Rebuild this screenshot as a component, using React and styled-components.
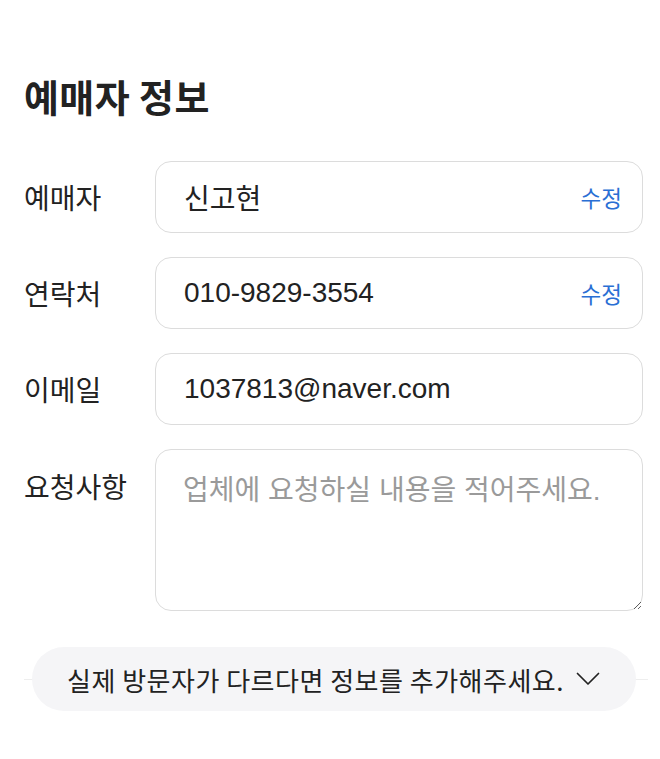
import React, { useState } from 'react';
import styled, { createGlobalStyle } from 'styled-components';

const GlobalStyle = createGlobalStyle`
  html, body {
    margin: 0;
    padding: 0;
    background: #ffffff;
  }
  body {
    font-family: "Liberation Sans", "Noto Sans CJK KR", sans-serif;
    color: #222222;
  }
`;

const fields = [
    { label: '예매자', value: '신고현', editable: true },
    { label: '연락처', value: '010-9829-3554', editable: true },
    { label: '이메일', value: '1037813@naver.com', editable: false },
];

const App = () => {
    const [request, setRequest] = useState('');

    return (
        <>
            <GlobalStyle />
            <Section>
                <Title>예매자 정보</Title>
                <Form>
                    {fields.map((f) => (
                        <Row key={f.label}>
                            <Label>{f.label}</Label>
                            <InputBox>
                                <Value>{f.value}</Value>
                                {f.editable && <EditButton>수정</EditButton>}
                            </InputBox>
                        </Row>
                    ))}
                    <Row $top>
                        <Label $top>요청사항</Label>
                        <TextArea
                            value={request}
                            onChange={(e) => setRequest(e.target.value)}
                            placeholder="업체에 요청하실 내용을 적어주세요."
                        />
                    </Row>
                </Form>
                <ToggleWrap>
                    <ToggleButton>
                        실제 방문자가 다르다면 정보를 추가해주세요.
                        <svg width="24" height="14" viewBox="0 0 24 14" fill="none" stroke="#222" strokeWidth="1.7" strokeLinecap="round" strokeLinejoin="round">
                            <path d="M1.5 1.5l10.5 10.5 10.5-10.5" />
                        </svg>
                    </ToggleButton>
                </ToggleWrap>
            </Section>
        </>
    );
};

const Section = styled.section`
    padding: 72px 17px 48px 24px;
`;

const Title = styled.h2`
    margin: 0 0 41px 0;
    font-family: "Noto Sans CJK KR", sans-serif;
    font-size: 38px;
    font-weight: 700;
    line-height: 48px;
    letter-spacing: 0.4px;
    color: #222;
`;

const Form = styled.div`
    display: flex;
    flex-direction: column;
    gap: 24px;
`;

const Row = styled.div`
    display: flex;
    align-items: ${(p) => (p.$top ? 'flex-start' : 'center')};
`;

const Label = styled.div`
    width: 131px;
    flex-shrink: 0;
    font-size: 28px;
    line-height: 40px;
    color: #222;
    padding-top: ${(p) => (p.$top ? '20px' : '5px')};
`;

const InputBox = styled.div`
    flex: 1;
    height: 72px;
    box-sizing: border-box;
    border: 1px solid #dcdcdc;
    border-radius: 16px;
    display: flex;
    align-items: center;
    justify-content: space-between;
    padding: 0 20px 0 28px;
`;

const Value = styled.span`
    font-size: 28px;
    color: #222;
`;

const EditButton = styled.button`
    border: none;
    background: none;
    padding: 0;
    font-family: "Noto Sans CJK KR", sans-serif;
    font-size: 22.5px;
    color: #2a6fd4;
    cursor: pointer;
`;

const TextArea = styled.textarea`
    flex: 1;
    height: 162px;
    box-sizing: border-box;
    border: 1px solid #dcdcdc;
    border-radius: 16px;
    padding: 21px 27px;
    font-family: inherit;
    font-size: 28px;
    line-height: 40px;
    color: #222;
    outline: none;
    resize: vertical;
    &::placeholder {
        color: #9a9a9a;
    }
`;

const ToggleWrap = styled.div`
    position: relative;
    margin-top: 36px;
    display: flex;
    justify-content: center;
    &::before {
        content: '';
        position: absolute;
        left: 0;
        right: -5px;
        top: 50%;
        height: 1px;
        background: #eeeeee;
    }
`;

const ToggleButton = styled.button`
    position: relative;
    width: calc(100% - 15px);
    height: 64px;
    border: none;
    border-radius: 32px;
    background: #f5f5f7;
    display: flex;
    align-items: center;
    justify-content: center;
    gap: 12px;
    font-family: "Noto Sans CJK KR", sans-serif;
    font-size: 26px;
    letter-spacing: 0.5px;
    color: #222;
    cursor: pointer;
`;

export default App;
